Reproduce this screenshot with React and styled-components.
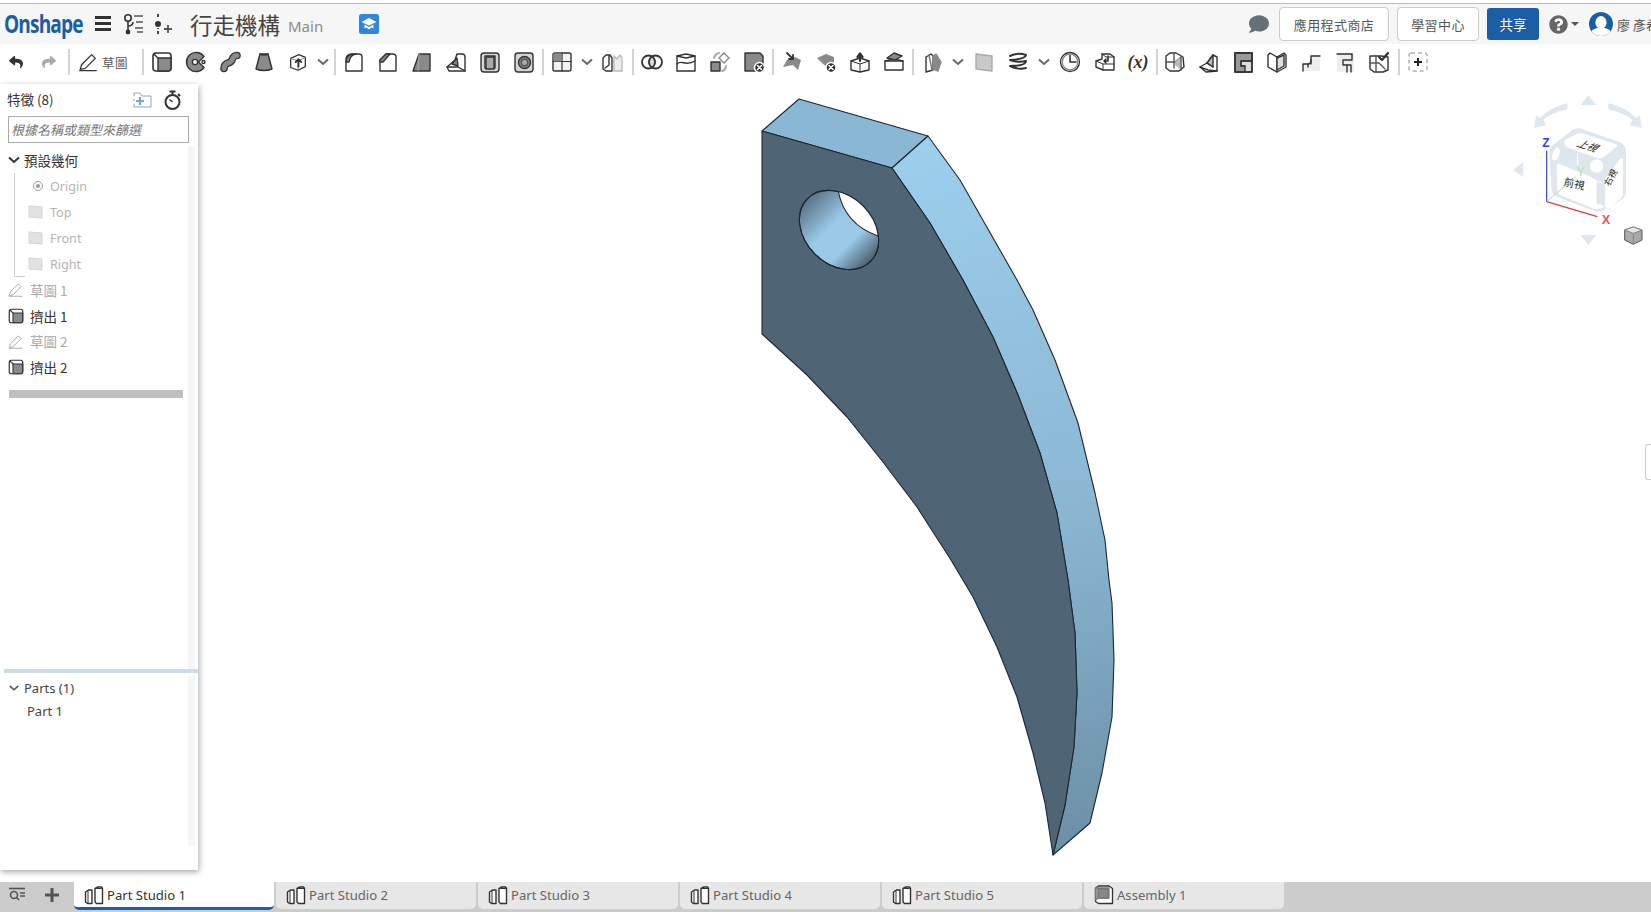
import React from "react";
import styled, { createGlobalStyle } from "styled-components";
import { FaReply, FaShare, FaComment, FaQuestionCircle } from "react-icons/fa";

const FONT = '"Noto Sans", "Noto Sans CJK TC", sans-serif';
const CJK = '"Noto Sans CJK TC", "Noto Sans", sans-serif';

const Global = createGlobalStyle`
  html, body { margin: 0; padding: 0; background: #fff; overflow: hidden; }
  * { box-sizing: border-box; }
  #root { height: 912px; }
`;

const Page = styled.div`
  width: 1651px; height: 912px; display: flex; flex-direction: column;
  font-family: ${FONT}; overflow: hidden; background: #fff; padding-top: 3px;
`;

/* ---------- top bar ---------- */
const TopBar = styled.header`
  height: 41px; flex: none; display: flex; align-items: center;
  background: #f6f6f6; border-top: 1px solid #bbb; padding: 0 0 0 4px;
`;
const Logo = styled.div`
  font-family: "Open Sans", sans-serif; font-weight: 700; font-size: 21.5px; color: #1b5ea6;
  letter-spacing: -1px; width: 91px; line-height: 1; margin-top: -1px; transform-origin: left center; transform: scale(.89, 1.12);
`;
const Burger = styled.div`
  width: 16px; height: 15px; margin-top: -1px; flex: none;
  border-top: 3px solid #333; border-bottom: 3px solid #333;
  &::after { content: ""; display: block; height: 3px; margin-top: 3px; background: #333; }
`;
const HeadIcon = styled.span`
  display: flex; flex: none; margin-left: ${p => p.$ml || 0}px; margin-right: ${p => p.$mr || 0}px;
`;
const Title = styled.div`
  font-family: ${CJK}; font-size: 22.5px; color: #444; margin-left: 16px; line-height: 1; white-space: nowrap;
`;
const Branch = styled.div`
  font-size: 15px; color: #8a8a8a; margin-left: 8px; margin-top: 3px; width: 71px;
`;
const RightTools = styled.div`
  margin-left: auto; display: flex; align-items: center; height: 100%;
`;
const OutlineButton = styled.div`
  height: 34px; width: ${p => p.$w}px; margin-right: 8px; border: 1px solid #ccc; border-radius: 4px; background: #fff;
  display: flex; align-items: center; justify-content: center; font-family: ${CJK}; font-size: 13px; color: #555;
  letter-spacing: .4px; white-space: nowrap;
`;
const ShareButton = styled.div`
  height: 32px; width: 52px; border-radius: 3px; background: #1b5ea6; color: #fff; font-family: ${CJK}; font-size: 13.5px;
  display: flex; align-items: center; justify-content: center;
`;
const UserName = styled.div`
  width: 34px; overflow: hidden; white-space: nowrap; font-family: ${CJK}; font-size: 13px; color: #555; margin-left: 4px;
`;
const Caret = styled.span`
  width: 0; height: 0; border-left: 4px solid transparent; border-right: 4px solid transparent; border-top: 4px solid #555; margin-left: 3px; margin-right: 10px;
`;

/* ---------- toolbar ---------- */
const Toolbar = styled.nav`
  height: 40px; flex: none; display: flex; align-items: flex-start; padding-top: 5px; background: #fff;
`;
const ToolButton = styled.div`
  width: ${p => p.$w || 34}px; height: 26px; flex: none; display: flex; align-items: center; justify-content: center;
  color: ${p => p.$color || "#333"};
`;
const SketchButton = styled.div`
  width: 69px; height: 26px; flex: none; display: flex; align-items: center; padding-left: 5px;
`;
const Sep = styled.div`
  width: 2px; height: 26px; flex: none; background: #d4d4d4;
  margin-left: ${p => p.$l ?? 1}px; margin-right: ${p => p.$r ?? 1}px;
`;
const SketchLabel = styled.span`
  font-family: ${CJK}; font-size: 12.5px; color: #555; margin-left: 3px; letter-spacing: .5px;
`;
const VarText = styled.span`
  font-family: "Liberation Serif", serif; font-style: italic; font-weight: 700; font-size: 18px; color: #333;
`;

/* ---------- main ---------- */
const Main = styled.main`
  flex: 1; position: relative; min-height: 0;
`;
const Canvas = styled.svg`
  position: absolute; left: 0; top: 0;
`;
const CubeWidget = styled.svg`
  position: absolute; right: 0; top: 6px;
`;
const EdgeHandle = styled.div`
  position: absolute; right: 0; top: 360px; width: 6px; height: 36px; background: #fff;
  border: 1px solid #ccc; border-right: none; border-radius: 3px 0 0 3px;
`;
const Panel = styled.aside`
  position: relative; z-index: 1; width: 198px; height: 786px; background: #fff; display: flex; flex-direction: column;
  box-shadow: 1px 2px 6px rgba(0,0,0,.35);
`;
const PanelTop = styled.section`
  height: 585px; flex: none; display: flex; flex-direction: column;
`;
const PanelHeader = styled.div`
  height: 32px; flex: none; display: flex; align-items: center; padding: 0 16px 0 7px; font-size: 13.5px; color: #333; font-family: ${CJK};
`;
const HeaderTitle = styled.span`
  flex: 1; margin-top: -2px;
`;
const Filter = styled.div`
  height: 27px; flex: none; margin: 0 9px 0 8px; border: 1px solid #aaa; padding-left: 2px; font-family: ${CJK};
  font-style: italic; font-size: 13px; color: #777; line-height: 26px; white-space: nowrap; overflow: hidden;
`;
const TreeArea = styled.div`
  flex: 1; min-height: 0; display: flex; padding-top: 4px;
`;
const Tree = styled.div`
  flex: 1; min-width: 0;
`;
const Track = styled.div`
  width: 7px; flex: none; margin-right: 3px; background: #f4f7fa;
`;
const TreeRow = styled.div`
  height: ${p => p.$h || 26}px; display: flex; align-items: center; padding-left: ${p => p.$pl || 0}px;
  font-family: ${CJK}; font-size: 13.5px; color: ${p => p.$dim ? "#aaa" : "#333"}; white-space: nowrap;
`;
const DatumName = styled.span`
  font-family: ${FONT}; font-size: 12.6px; color: #b4b4b4;
`;
const RowIcon = styled.span`
  width: ${p => p.$w || 22}px; flex: none; display: flex; justify-content: ${p => p.$j || "flex-start"}; padding-right: ${p => p.$pr || 0}px;
`;
const DefaultGroup = styled.div`
  margin-left: 14px; border-left: 1px solid #ccc; height: 104px; position: relative;
  &::after { content: ""; position: absolute; left: 0; bottom: 0; width: 10px; height: 1px; background: #ccc; }
`;
const RollBar = styled.div`
  height: 8px; margin: 10px 5px 0 9px; background: #c0c0c0;
`;
const Divider = styled.div`
  height: 4px; flex: none; margin-left: 4px; background: #ccdbe6;
`;
const PartsArea = styled.section`
  flex: 1; min-height: 0; display: flex; padding: 3px 0 24px;
`;
const PartsList = styled.div`
  flex: 1; font-size: 13px; color: #444;
`;
const PartRow = styled.div`
  height: ${p => p.$h || 22}px; display: flex; align-items: center; padding-left: ${p => p.$pl}px; white-space: nowrap;
`;

/* ---------- tabs ---------- */
const TabBar = styled.footer`
  height: 30px; flex: none; display: flex; background: #ccc;
`;
const TabTools = styled.div`
  width: 74px; flex: none; display: flex; align-items: center; padding: 0 0 4px 8px; gap: 17px;
`;
const Tab = styled.div`
  width: 200px; height: ${p => p.$active ? 28 : 27}px; margin-right: 2px; flex: none; display: flex; align-items: center; padding: 0 0 ${p => p.$active ? 0 : 2}px 10px; gap: 3px;
  background: ${p => p.$active ? "#fff" : "#e7e7e7"}; color: ${p => p.$active ? "#333" : "#666"};
  border-radius: 0 0 5px 5px; font-size: 13.1px; white-space: nowrap;
  border-bottom: ${p => p.$active ? "3px solid #1b5ea6" : "none"};
`;

/* ---------- icons ---------- */
const Svg = ({ size = 24, children, ...rest }) => (
  <svg width={size} height={size} viewBox="0 0 24 24" fill="none" stroke="#333" strokeWidth="1.4" strokeLinejoin="round" strokeLinecap="round" {...rest}>{children}</svg>
);
const G = "#8a8a8a";
const L = "#d4d4d4";

const Pencil = ({ size = 22, c = "#333" }) => (
  <Svg size={size} stroke={c}><path d="M3.5 20l1.5-5L16 4l4 4L9 19z" /><path d="M3 21.5h18" /></Svg>
);
const Extrude = ({ size = 24 }) => (
  <Svg size={size}><rect x="3" y="3" width="18" height="18" rx="3" fill="#fff" strokeWidth="1.6" /><path d="M8 8h13v10a3 3 0 0 1-3 3H8z" fill={G} /><path d="M3.8 4L8 8" /></Svg>
);
const Chevron = ({ size = 14, c = "#666", sw = 2 }) => (
  <svg width={size} height={size} viewBox="0 0 14 14" fill="none" stroke={c} strokeWidth={sw}><path d="M2 4.5l5 4.5 5-4.5" /></svg>
);
const ICONS = {
  extrude: <Extrude />,
  revolve: <Svg><path d="M20 6.5A9.6 9.6 0 1 0 20 17.5L14.5 12z" fill={G} /><circle cx="11" cy="12" r="2.6" fill="#fff" /><circle cx="19.5" cy="12" r="1.5" fill="#fff" /></Svg>,
  sweep: <Svg><path d="M6 18.5c0-6 5-5 7-7s1-6 6-6" stroke="#333" strokeWidth="7.6" /><path d="M6 18.5c0-6 5-5 7-7s1-6 6-6" stroke={G} strokeWidth="5" /></Svg>,
  loft: <Svg><path d="M8 4h8l4 15q-8 3-16 0z" fill={G} /><path d="M8 4q4 2 8 0" /></Svg>,
  thicken: <Svg size={22}><path d="M4 8l9-4 7 3v10l-8 4-8-3z" fill="#fff" /><path d="M4 8l8 3v10M20 7l-8 4" stroke="#777" strokeWidth="1" /><path d="M12.5 17V9M9.5 12l3-3 3 3" strokeWidth="2" /></Svg>,
  fillet: <Svg><path d="M4 21V10q0-6 6-6h7q3 0 3 3v14z" fill="#fff" /><path d="M4 12q0-8 8-8h2q-6 1-7 8z" fill={G} /></Svg>,
  chamfer: <Svg><path d="M4 21V10l6-6h7q3 0 3 3v14z" fill="#fff" /><path d="M4 10l6-6h4l-7 8H4z" fill={G} /></Svg>,
  draft: <Svg><path d="M9 4h11v17H3z" fill={G} /><path d="M9 4l-1 17" stroke="#aaa" strokeWidth="1" /></Svg>,
  rib: <Svg><path d="M3 17l8-7 2-6h5q3 0 3 3v14H5z" fill="#fff" /><path d="M8 14l5-6 1 8z" fill={G} /><path d="M3 17l11 0 7 4" /></Svg>,
  shell: <Svg><rect x="3" y="3" width="18" height="19" rx="3" fill={L} /><path d="M7 6h10v12H7z" fill="#f1f1f1" /><path d="M8 7h8v12H8z" fill="#aaa" stroke="#333" /></Svg>,
  hole: <Svg><rect x="3" y="3" width="18" height="19" rx="3" fill={L} /><circle cx="12.5" cy="12.5" r="6" fill="#888" /><circle cx="12.5" cy="12.5" r="3.2" fill="#aaa" stroke="#555" /></Svg>,
  pattern: <Svg><rect x="3" y="3" width="18" height="18" rx="2" fill="#f3f3f3" /><path d="M3 11.5h18M12 3v18" strokeWidth="1.2" /><path d="M3.5 3.5h8v8h-8z" fill={G} stroke="none" /></Svg>,
  mirror: <Svg><path d="M3 8l3-3h4l2 3v13H6l-3-2z" fill="#fff" /><path d="M14 6l3 3 3-4 2 3v13h-8z" fill="#eee" stroke="#bbb" /><path d="M9 6v9l-4 3" /></Svg>,
  boolean: <Svg><circle cx="8.5" cy="12" r="6.5" strokeWidth="1.8" /><circle cx="15.5" cy="12" r="6.5" strokeWidth="1.8" /><path d="M12 6.6a6.5 6.5 0 0 1 0 10.8 6.5 6.5 0 0 1 0-10.8z" fill="#ddd" /></Svg>,
  split: <Svg><path d="M3 6l9-2 9 2v15H3z" fill="#fff" /><path d="M3 14c5-5 8 3 18-3" /><path d="M3 6l9 2 9-2" /></Svg>,
  transform: <Svg><rect x="3" y="12" width="9" height="9" fill={G} /><path d="M16 3l5 5-5 5-5-5z" fill="#fff" stroke="#888" strokeDasharray="2 1" /><path d="M6 8q1-4 5-5M18 16q0 4-4 5" stroke="#aaa" strokeWidth="2" /></Svg>,
  delpart: <Svg><path d="M3 3h15l3 3v15H3z" fill={G} /><circle cx="17.5" cy="17.5" r="5" fill="#333" stroke="#fff" /><path d="M15.5 15.5l4 4M19.5 15.5l-4 4" stroke="#fff" strokeWidth="1.5" /></Svg>,
  moveface: <Svg><path d="M3 17l4-7 8-3 6 3-3 10-5-5z" fill={G} stroke="none" /><path d="M7 3l6 6M13 5v4H9" strokeWidth="1.8" /></Svg>,
  delface: <Svg><path d="M3 8l9-4 8 3v6l-6 5-6-5z" fill={G} stroke="none" /><circle cx="17" cy="17.5" r="5" fill="#333" stroke="#fff" /><path d="M15 15.5l4 4M19 15.5l-4 4" stroke="#fff" strokeWidth="1.5" /></Svg>,
  offset: <Svg><path d="M3 11l9-3 9 3v9l-9 2-9-2z" fill="#fff" /><path d="M3 11l9 3 9-3M12 14v8" strokeWidth="1" /><path d="M12 11V4M9.5 7L12 3.5 14.5 7" strokeWidth="2.2" /></Svg>,
  replace: <Svg><path d="M3 11l9-2 9 2v9H3z" fill="#fff" /><path d="M3 11h18" /><path d="M5 8l7-5 8 3-7 4z" fill={G} /></Svg>,
  plane3: <Svg><path d="M6 7l5-3 2 2v14l-7 2z" fill="#fff" /><path d="M13 6l3-2 5 8-3 9-5-2z" fill={G} stroke="#888" /><path d="M9 5l3 15" stroke="#777" /></Svg>,
  plane: <Svg><path d="M4 4l16 2v15L4 19z" fill="#c9c9c9" stroke="#aaa" /></Svg>,
  helix: <Svg strokeWidth="2"><path d="M4 6q8-4 16-1M20 5q0 4-16 5M4 10q8 3 16 1M20 11q0 5-16 5M4 16q8 4 16 2" /></Svg>,
  clock: <Svg strokeWidth="1.3"><circle cx="12" cy="12" r="9.5" /><circle cx="12" cy="12" r="7.8" stroke="#888" /><path d="M12 5.5V12h6" strokeWidth="1.6" /></Svg>,
  instance: <Svg><path d="M3 11l6-2v-5h8l4 3v13H10l-7-3z" fill="#fff" /><path d="M3 11l7 3h11M10 14v6M9 4l4 3h8" strokeWidth="1" /><path d="M15 6v5h-4M13 9l-2 2 2 2" strokeWidth="1.6" /></Svg>,
  sheet1: <Svg><path d="M3 6l4-3h6l7 4 1 10-5 4H7l-4-3z" fill="#fff" /><path d="M11 4v14M3 12h9l6-5v13" stroke="#555" /><path d="M12 12l5-5v12l-5-4z" fill="#bbb" stroke="none" /></Svg>,
  sheet2: <Svg><path d="M3 17l7-4 6-8 4 2v14l-11 1z" fill="#fff" /><path d="M10 13l6-8v12z" fill="#bbb" stroke="#333" /><path d="M3 17l8 3 9 1M10 13l6 4" /></Svg>,
  sheet3: <Svg><rect x="4" y="3" width="17" height="19" fill="#ddd" /><path d="M4 3h17v8H10v5h4v6H4z" fill="#999" /><rect x="4" y="3" width="17" height="19" fill="none" /><path d="M10 11h11M10 11v5h4" /></Svg>,
  sheet4: <Svg><path d="M12 7L5 3 3 5v12l9 5 9-5V5l-2-2z" fill="#fff" /><path d="M12 7v15" /><path d="M12 8l7-3v11l-7 4z" fill="#ddd" stroke="#333" /></Svg>,
  sheet5: <Svg><path d="M4 21v-7h5l3-2V6h9v15z" fill="#eee" stroke="none" /><path d="M4 21v-7h5v3M12 14V6h9" /><path d="M9 14c3 0 3-2 3-4" /></Svg>,
  sheet6: <Svg><path d="M4 3h17v19H4z" fill="#eee" stroke="none" /><path d="M4 4h15v6h-9v5h8v7" /><path d="M14 15v7" /></Svg>,
  sheet7: <Svg><path d="M3 6h11l7 1v13l-5 2H7l-4-3z" fill="#fff" /><path d="M9 6v15M3 13h9l6 6" stroke="#555" /><path d="M12 7l3 3 6-7" strokeWidth="2.2" /></Svg>,
};

const PlaneIcon = () => (
  <svg width="15" height="14" viewBox="0 0 15 14"><path d="M1 1l13 1v11L1 12z" fill="#e2e2e2" stroke="#d4d4d4" /></svg>
);
const PartStudioIcon = ({ c = "#333" }) => (
  <svg width="20" height="20" viewBox="0 0 20 20" fill="#fff" stroke={c} strokeWidth="1.4" strokeLinejoin="round">
    <path d="M1.5 7l3-2h3.5v13.5H3.5L1.5 17z" /><path d="M4 5.5v13" strokeWidth="1" />
    <path d="M11 3.5L14 2h3.5l1 1.5v15H12.5L11 17z" /><path d="M14 2v.5M11 3.5h7.5" strokeWidth="1" />
  </svg>
);
const AssemblyIcon = () => (
  <svg width="20" height="20" viewBox="0 0 20 20" stroke="#333" strokeWidth="1.3" strokeLinejoin="round">
    <path d="M1.5 3l3-2H15l3.5 2.5V18.5H4.5l-3-2z" fill="#fff" />
    <path d="M1.5 3H15v10H4.5L1.5 15z" fill="#999" stroke="#777" />
    <path d="M4.5 4h9.5v9H4.5z" fill="#888" stroke="#777" />
  </svg>
);

const TOOLS = [
  ["i", "extrude"], ["i", "revolve"], ["i", "sweep"], ["i", "loft"], ["i", "thicken"], ["c", 16], ["s", 3, 1],
  ["i", "fillet"], ["i", "chamfer"], ["i", "draft"], ["i", "rib"], ["i", "shell"], ["i", "hole"], ["s", 1, 1],
  ["i", "pattern"], ["c", 16], ["i", "mirror"], ["s", 3, 1],
  ["i", "boolean"], ["i", "split"], ["i", "transform"], ["i", "delpart"], ["s", 1, 1],
  ["i", "moveface"], ["i", "delface"], ["i", "offset"], ["i", "replace"], ["s", 1, 1],
  ["i", "plane3"], ["c", 18], ["i", "plane"], ["i", "helix"], ["c", 17], ["i", "clock", 36], ["i", "instance"],
];
const SHEET = ["sheet1", "sheet2", "sheet3", "sheet4", "sheet5", "sheet6", "sheet7"];

const renderTool = (t, i) => {
  if (t[0] === "s") return <Sep key={i} $l={t[1]} $r={t[2]} />;
  if (t[0] === "c") return <ToolButton key={i} $w={t[1]}><Chevron /></ToolButton>;
  return <ToolButton key={i} $w={t[2]}>{ICONS[t[1]]}</ToolButton>;
};

const TAB_NAMES = ["Part Studio 1", "Part Studio 2", "Part Studio 3", "Part Studio 4", "Part Studio 5"];

const Model = () => (
  <Canvas width="1651" height="798" viewBox="0 84 1651 798">
    <defs>
      <linearGradient id="side" gradientUnits="userSpaceOnUse" x1="900" y1="140" x2="1080" y2="855">
        <stop offset="0" stopColor="#9dcfee" />
        <stop offset=".55" stopColor="#8ab6d2" />
        <stop offset="1" stopColor="#6b8fa5" />
      </linearGradient>
      <linearGradient id="bore" gradientUnits="userSpaceOnUse" x1="797" y1="230" x2="881" y2="230">
        <stop offset="0" stopColor="#5f788b" />
        <stop offset=".4" stopColor="#99c9e7" />
        <stop offset=".7" stopColor="#99c9e7" />
        <stop offset="1" stopColor="#55697a" />
      </linearGradient>
      <clipPath id="boreClip"><ellipse cx="839" cy="230" rx="44.5" ry="34" transform="rotate(45 839 230)" /></clipPath>
    </defs>
    <g stroke="#1d2730" strokeWidth="1.1" strokeLinejoin="round">
      <polygon fill="#8ab7d3" points="762,131 799,99 928,136 892,168" />
      <polygon fill="url(#side)" points="892,168 928,136 960,180 1017,280 1033,310 1055,360 1078,423 1095,493 1105,540 1109,580 1112,603 1114,660 1112,717 1102,773 1090,823 1053,855 1065,805 1074,747 1077,693 1075,633 1068,580 1057,513 1040,453 1018,395 993,337 963,280 930,223" />
      <polygon fill="#4f6575" points="762,131 892,168 930,223 963,280 993,337 1018,395 1040,453 1057,513 1068,580 1075,633 1077,693 1074,747 1065,805 1053,855 1045,803 1033,753 1017,697 997,647 973,597 951,560 917,507 883,462 847,417 807,375 762,334" />
      <ellipse cx="839" cy="230" rx="44.5" ry="34" transform="rotate(45 839 230)" fill="url(#bore)" />
      <g clipPath="url(#boreClip)">
        <path d="M838 190C842 212 855 228 878 236L895 190Z" fill="#fff" />
      </g>
      <ellipse cx="839" cy="230" rx="44.5" ry="34" transform="rotate(45 839 230)" fill="none" />
    </g>
  </Canvas>
);

const ViewCube = () => (
  <CubeWidget width="161" height="170" viewBox="0 0 483 510">
    <g fill="#dfe7ee">
      <path d="M272 45l23-30 23 30z" />
      <path d="M70 240l30-25v47z" />
      <path d="M272 435h46l-23 30z" />
      <path d="M232 40v18q-50 12-72 32l8 16-35 8 5-38 12 8q30-32 82-44z" />
      <path d="M355 40v18q50 12 72 32l-8 16 36 8-5-38-12 8q-30-32-83-44z" />
      <path d="M250 118q12-6 28 0l110 38q20 8 20 30v120q0 12-10 20l-60 36q-12 6-28 0l-110-42q-14-6-16-24l-6-110q0-14 12-22z" />
    </g>
    <g fill="#fff">
      <path d="M225 150l35-18q10-4 20-1l95 30q10 4 4 10l-38 30q-8 6-20 3l-90-32q-12-8-6-22z" />
      <path d="M200 228q0-8 10-6l100 42q10 5 10 15v70q0 10-10 6l-95-38q-12-6-13-18z" />
      <path d="M345 268l45-60q8-8 9 4v100q0 8-8 14l-35 28q-8 6-11-6z" />
      <circle cx="320" cy="228" r="20" />
      <ellipse cx="198" cy="192" rx="10" ry="20" transform="rotate(20 198 192)" />
      <ellipse cx="320" cy="350" rx="20" ry="8" />
    </g>
    <path d="M263 190v35M300 265l40 15" stroke="#fff" strokeWidth="3" />
    <text x="0" y="0" fontFamily={CJK} fontSize="30" fill="#222" transform="translate(258 168) rotate(18) skewX(-28)">上視</text>
    <text x="0" y="0" fontFamily={CJK} fontSize="31" fill="#222" transform="translate(220 286) rotate(12)">前視</text>
    <text x="0" y="0" fontFamily={CJK} fontSize="26" fill="#222" transform="translate(358 290) rotate(-62)">右視</text>
    <path d="M170 335V182" stroke="#3040e0" strokeWidth="3.5" />
    <path d="M170 335L258 260" stroke="#b5e0b0" strokeWidth="3" />
    <path d="M170 335L322 380" stroke="#e23b3b" strokeWidth="3.5" />
    <text x="157" y="172" fontFamily="Liberation Sans, sans-serif" fontWeight="700" fontSize="36" fill="#3040e0">Z</text>
    <text x="260" y="258" fontFamily="Liberation Sans, sans-serif" fontSize="36" fill="#b5e0b0">Y</text>
    <text x="335" y="402" fontFamily="Liberation Sans, sans-serif" fontWeight="700" fontSize="38" fill="#e65555">X</text>
    <g stroke="#555" strokeWidth="3" strokeLinejoin="round">
      <path d="M404 420l26-9 26 9v30l-26 13-26-13z" fill="#aaa" />
      <path d="M404 420l26 10 26-10-26-9z" fill="#e8e8e8" stroke="#888" />
      <path d="M430 430v33" stroke="#888" />
    </g>
  </CubeWidget>
);

export default function App() {
  return (
    <Page>
      <Global />
      <TopBar>
        <Logo>Onshape</Logo>
        <Burger />
        <HeadIcon $ml={11}>
          <svg width="24" height="24" viewBox="0 0 24 24" fill="none" stroke="#333" strokeWidth="1.6">
            <circle cx="6" cy="6" r="3.2" /><path d="M6 9v11" /><circle cx="6" cy="20" r="1.6" fill="#333" /><path d="M6 14q5 0 5-4" />
            <path d="M12 4h9M14 10h7M13 16h8M15 20h6" stroke="#555" />
          </svg>
        </HeadIcon>
        <HeadIcon $ml={8}>
          <svg width="20" height="22" viewBox="0 0 20 22" fill="none" stroke="#333" strokeWidth="1.8">
            <path d="M4 1v3M4 7v0M4 18v3" /><circle cx="4" cy="11" r="3" fill="#333" stroke="none" /><path d="M4 15v1" /><path d="M10 16h8M14 12v8" stroke="#555" />
          </svg>
        </HeadIcon>
        <Title>行走機構</Title>
        <Branch>Main</Branch>
        <HeadIcon>
          <svg width="20" height="20" viewBox="0 0 20 20">
            <rect width="20" height="20" rx="2.5" fill="#2e86de" />
            <path d="M10 4L2.5 8 10 11.5 17.5 8z" fill="#fff" /><path d="M5.5 10.5v4l2-1 2.5 2 2.5-2 2 1v-4L10 13z" fill="#fff" />
          </svg>
        </HeadIcon>
        <RightTools>
          <HeadIcon $mr={10}><FaComment size={20} color="#667078" /></HeadIcon>
          <OutlineButton $w={110}>應用程式商店</OutlineButton>
          <OutlineButton $w={82}>學習中心</OutlineButton>
          <ShareButton>共享</ShareButton>
          <HeadIcon $ml={10}><FaQuestionCircle size={19} color="#666" /></HeadIcon>
          <Caret />
          <HeadIcon>
            <svg width="24" height="24" viewBox="0 0 24 24">
              <circle cx="12" cy="12" r="12" fill="#1b5ea6" />
              <clipPath id="av"><circle cx="12" cy="12" r="12" /></clipPath>
              <g clipPath="url(#av)" fill="#fff"><ellipse cx="12" cy="10.5" rx="5.6" ry="6.5" /><path d="M0 24q2-7 8-8h8q6 1 8 8z" /></g>
            </svg>
          </HeadIcon>
          <UserName>廖 彥希</UserName>
        </RightTools>
      </TopBar>

      <Toolbar>
        <ToolButton $w={32}><FaReply size={14} /></ToolButton>
        <ToolButton><FaShare size={14} color="#aaa" /></ToolButton>
        <Sep $l={2} $r={2} />
        <SketchButton><Pencil /><SketchLabel>草圖</SketchLabel></SketchButton>
        <Sep />
        {TOOLS.map(renderTool)}
        <ToolButton $w={32}><VarText>(x)</VarText></ToolButton>
        <Sep $l={2} $r={0} />
        {SHEET.map(n => <ToolButton key={n}>{ICONS[n]}</ToolButton>)}
        <Sep $l={2} $r={2} />
        <ToolButton $w={32}>
          <svg width="20" height="20" viewBox="0 0 20 20" fill="none">
            <rect x="1" y="1" width="18" height="18" rx="2" stroke="#888" strokeDasharray="4 3" />
            <path d="M10 6v8M6 10h8" stroke="#222" strokeWidth="2" />
          </svg>
        </ToolButton>
      </Toolbar>

      <Main>
        <Model />
        <ViewCube />
        <EdgeHandle />
        <Panel>
          <PanelTop>
            <PanelHeader>
              <HeaderTitle>特徵 (8)</HeaderTitle>
              <HeadIcon $mr={11}>
                <svg width="19" height="16" viewBox="0 0 19 16" fill="none" stroke="#8ea2b5" strokeWidth="1">
                  <path d="M1 4V1h6l2 3h9v11H1v-3" /><path d="M1 7v2" /><path d="M7 5v8M3 9h8" stroke="#6fa8dc" strokeWidth="2.2" />
                </svg>
              </HeadIcon>
              <HeadIcon>
                <svg width="19" height="20" viewBox="0 0 19 20" fill="none" stroke="#333" strokeWidth="2">
                  <circle cx="9.5" cy="12" r="7" /><path d="M6.5 1.5h6M9.5 2v3M15 4l2 2" /><path d="M9.5 12l-3-2.5" strokeWidth="1.5" />
                </svg>
              </HeadIcon>
            </PanelHeader>
            <Filter>根據名稱或類型來篩選</Filter>
            <TreeArea>
              <Tree>
                <TreeRow>
                  <RowIcon $w={24} $j="flex-end" $pr={3}><Chevron size={14} c="#333" /></RowIcon>
                  預設幾何
                </TreeRow>
                <DefaultGroup>
                  <TreeRow $dim $pl={17}>
                    <RowIcon $w={18}>
                      <svg width="12" height="12" viewBox="0 0 12 12" fill="none" stroke="#999"><circle cx="6" cy="6" r="4.5" /><circle cx="6" cy="6" r="2" fill="#999" stroke="none" /></svg>
                    </RowIcon>
                    <DatumName>Origin</DatumName>
                  </TreeRow>
                  {["Top", "Front", "Right"].map(n => (
                    <TreeRow $dim $pl={13} key={n}>
                      <RowIcon $w={22}><PlaneIcon /></RowIcon>
                      <DatumName>{n}</DatumName>
                    </TreeRow>
                  ))}
                </DefaultGroup>
                {[["草圖 1", true], ["擠出 1", false], ["草圖 2", true], ["擠出 2", false]].map(([n, dim]) => (
                  <TreeRow key={n} $dim={dim} $pl={7} $h={25.8}>
                    <RowIcon $w={23}>{dim ? <Pencil size={17} c="#aaa" /> : <Extrude size={18} />}</RowIcon>
                    {n}
                  </TreeRow>
                ))}
                <RollBar />
              </Tree>
              <Track />
            </TreeArea>
          </PanelTop>
          <Divider />
          <PartsArea>
            <PartsList>
              <PartRow $pl={8} $h={23}>
                <RowIcon $w={16}><Chevron size={12} c="#555" sw={1.8} /></RowIcon>
                Parts (1)
              </PartRow>
              <PartRow $pl={27} $h={24}>Part 1</PartRow>
            </PartsList>
            <Track />
          </PartsArea>
        </Panel>
      </Main>

      <TabBar>
        <TabTools>
          <svg width="18" height="16" viewBox="0 0 18 16" fill="none" stroke="#555" strokeWidth="1.6">
            <path d="M1 1.5h16" /><circle cx="6" cy="8" r="3.5" /><path d="M8.5 10.5L11 13M12 6h5M12 9h5" />
          </svg>
          <svg width="18" height="18" viewBox="0 0 18 18"><path d="M9 2v14M2 9h14" stroke="#555" strokeWidth="3" /></svg>
        </TabTools>
        {TAB_NAMES.map((n, i) => (
          <Tab key={n} $active={i === 0}><PartStudioIcon />{n}</Tab>
        ))}
        <Tab><AssemblyIcon />Assembly 1</Tab>
      </TabBar>
    </Page>
  );
}
